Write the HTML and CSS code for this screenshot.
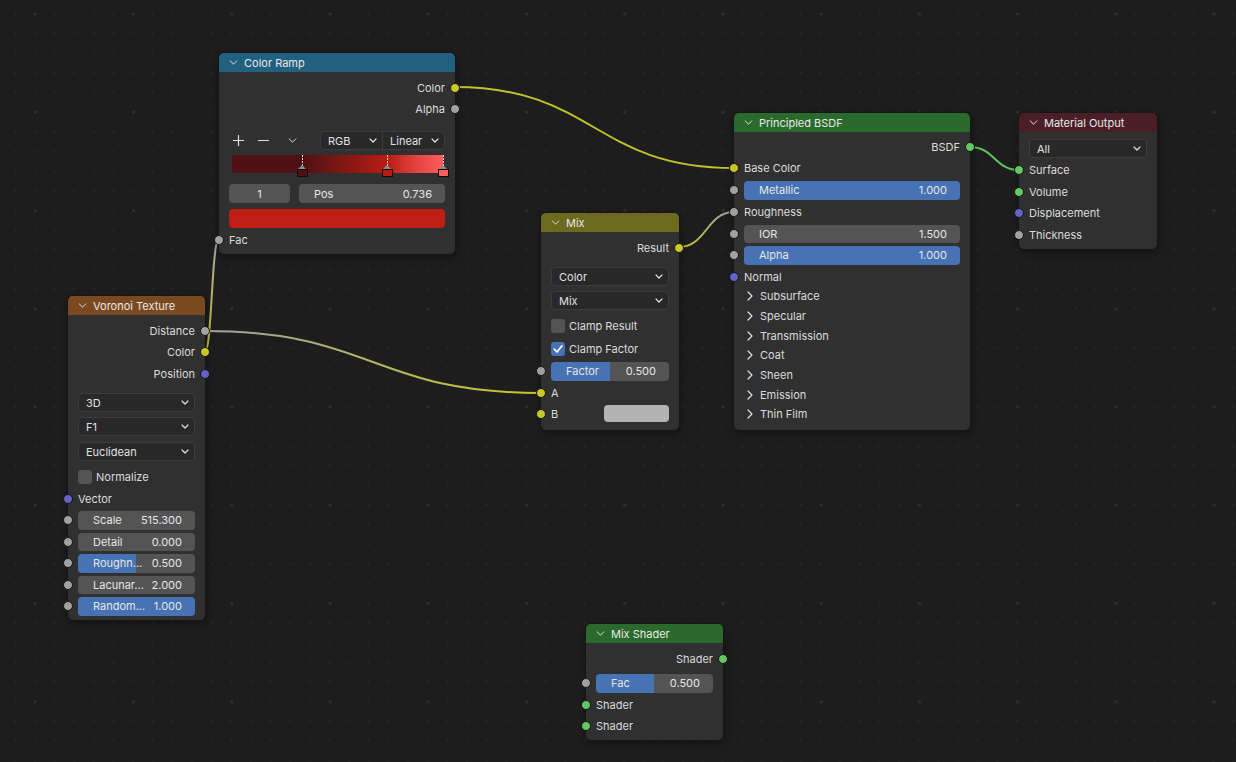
FILE: index.html
```html
<!DOCTYPE html>
<html>
<head>
<meta charset="utf-8">
<title>Shader Editor</title>
<link rel="stylesheet" href="styles.css">
</head>
<body>
<div class="canvas">
  <svg class="links" width="1236" height="762" viewBox="0 0 1236 762">
    <defs>
      <linearGradient id="gFac" gradientUnits="userSpaceOnUse" x1="205" y1="352" x2="218.5" y2="240">
        <stop offset="0" stop-color="#c7c729"/><stop offset="1" stop-color="#a1a1a1"/>
      </linearGradient>
      <linearGradient id="gDist" gradientUnits="userSpaceOnUse" x1="205" y1="331" x2="541" y2="393">
        <stop offset="0" stop-color="#a1a1a1"/><stop offset="1" stop-color="#c7c729"/>
      </linearGradient>
      <linearGradient id="gRes" gradientUnits="userSpaceOnUse" x1="679" y1="247" x2="734" y2="212">
        <stop offset="0" stop-color="#c7c729"/><stop offset="1" stop-color="#a1a1a1"/>
      </linearGradient>
    </defs>
    <path class="link" stroke="#c2c22a" d="M454.5,87 C594.25,87 594.25,168 734,168"/>
    <path class="link" stroke="url(#gFac)" d="M205,352 C211.75,352 211.75,240 218.5,240"/>
    <path class="link" stroke="url(#gDist)" d="M205,331 C373,331 373,393 541,393"/>
    <path class="link" stroke="url(#gRes)" d="M679,247 C706.5,247 706.5,212 734,212"/>
    <path class="link" stroke="#5ec25e" d="M970,147 C994.5,147 994.5,170 1019,170"/>
  </svg>

  <!-- Color Ramp -->
  <div class="node n-ramp">
    <div class="hdr h-blue"><svg class="chev" viewBox="0 0 10 6"><path d="M1 1 L5 5 L9 1"/></svg><span>Color Ramp</span></div>
    <div class="body pt5 pb3">
      <div class="row out">Color<i class="sock s-yel"></i></div>
      <div class="row out">Alpha<i class="sock s-gry"></i></div>
      <div class="ramp-tools mt12">
        <span class="tbtn"><svg viewBox="0 0 11 11"><path d="M5.5 0.5 V10.5 M0.5 5.5 H10.5"/></svg></span>
        <span class="tbtn"><svg viewBox="0 0 11 11"><path d="M0.5 5.5 H10.5"/></svg></span>
        <span class="tbtn tb3"><svg viewBox="0 0 10 6"><path d="M1 1 L5 5 L9 1"/></svg></span>
        <div class="dd-group">
          <div class="dd-half rgb"><span>RGB</span><svg class="ddchev" viewBox="0 0 8 5"><path d="M1 1 L4 4 L7 1"/></svg></div>
          <div class="dd-half lin"><span>Linear</span><svg class="ddchev" viewBox="0 0 8 5"><path d="M1 1 L4 4 L7 1"/></svg></div>
        </div>
      </div>
      <div class="ramp mt5">
        <div class="stop" style="--p:33.3%; --c:#4e1013"><i class="dash"></i><i class="tri"></i><i class="sq"></i></div>
        <div class="stop" style="--p:73.6%; --c:#b81c14"><i class="dash"></i><i class="tri"></i><i class="sq"></i></div>
        <div class="stop" style="--p:100%; --c:#ff5e5e"><i class="dash"></i><i class="tri"></i><i class="sq"></i></div>
      </div>
      <div class="ramp-nums mt11">
        <div class="field idx">1</div>
        <div class="field grow"><span>Pos</span><span>0.736</span></div>
      </div>
      <div class="swatch-wide mt6"></div>
      <div class="row in h22 mt1">Fac<i class="sock s-gry"></i></div>
    </div>
  </div>

  <!-- Voronoi Texture -->
  <div class="node n-vor">
    <div class="hdr h-orange"><svg class="chev" viewBox="0 0 10 6"><path d="M1 1 L5 5 L9 1"/></svg><span>Voronoi Texture</span></div>
    <div class="body pt5 pb45">
      <div class="row out h215">Distance<i class="sock s-gry"></i></div>
      <div class="row out h215">Color<i class="sock s-yel"></i></div>
      <div class="row out h215">Position<i class="sock s-pur"></i></div>
      <div class="dd mt85"><span>3D</span><svg class="ddchev" viewBox="0 0 8 5"><path d="M1 1 L4 4 L7 1"/></svg></div>
      <div class="dd mt5"><span>F1</span><svg class="ddchev" viewBox="0 0 8 5"><path d="M1 1 L4 4 L7 1"/></svg></div>
      <div class="dd mt6"><span>Euclidean</span><svg class="ddchev" viewBox="0 0 8 5"><path d="M1 1 L4 4 L7 1"/></svg></div>
      <div class="row chk h22 mt5"><i class="cb"></i>Normalize</div>
      <div class="row in">Vector<i class="sock s-pur"></i></div>
      <div class="field mt2"><span>Scale</span><span>515.300</span><i class="sock s-gry"></i></div>
      <div class="field mt3"><span>Detail</span><span>0.000</span><i class="sock s-gry"></i></div>
      <div class="field mt3" style="--v:49.5%"><span>Roughn...</span><span>0.500</span><i class="sock s-gry"></i></div>
      <div class="field mt3"><span>Lacunar...</span><span>2.000</span><i class="sock s-gry"></i></div>
      <div class="field mt3" style="--v:100%"><span>Random...</span><span>1.000</span><i class="sock s-gry"></i></div>
    </div>
  </div>

  <!-- Mix -->
  <div class="node n-mix">
    <div class="hdr h-olive"><svg class="chev" viewBox="0 0 10 6"><path d="M1 1 L5 5 L9 1"/></svg><span>Mix</span></div>
    <div class="body pt5 pb6">
      <div class="row out">Result<i class="sock s-yel"></i></div>
      <div class="dd mt9"><span>Color</span><svg class="ddchev" viewBox="0 0 8 5"><path d="M1 1 L4 4 L7 1"/></svg></div>
      <div class="dd mt5"><span>Mix</span><svg class="ddchev" viewBox="0 0 8 5"><path d="M1 1 L4 4 L7 1"/></svg></div>
      <div class="row chk h22 mt5"><i class="cb"></i>Clamp Result</div>
      <div class="row chk h22 mt1"><i class="cb on"><svg viewBox="0 0 14 14"><path d="M3.2 7.2 L6 10 L11 3.8"/></svg></i>Clamp Factor</div>
      <div class="field mt2" style="--v:50%"><span>Factor</span><span>0.500</span><i class="sock s-gry"></i></div>
      <div class="row in mt15">A<i class="sock s-yel"></i></div>
      <div class="row in between">B<i class="sock s-yel"></i><span class="swatch-b"></span></div>
    </div>
  </div>

  <!-- Principled BSDF -->
  <div class="node n-bsdf">
    <div class="hdr h-green"><svg class="chev" viewBox="0 0 10 6"><path d="M1 1 L5 5 L9 1"/></svg><span>Principled BSDF</span></div>
    <div class="body pt4 pb56">
      <div class="row out h215">BSDF<i class="sock s-grn"></i></div>
      <div class="row in h215">Base Color<i class="sock s-yel"></i></div>
      <div class="field mt2" style="--v:100%"><span>Metallic</span><span>1.000</span><i class="sock s-gry"></i></div>
      <div class="row in mt2">Roughness<i class="sock s-gry"></i></div>
      <div class="field mt2"><span>IOR</span><span>1.500</span><i class="sock s-gry"></i></div>
      <div class="field mt3" style="--v:100%"><span>Alpha</span><span>1.000</span><i class="sock s-gry"></i></div>
      <div class="row in h20 mt2">Normal<i class="sock s-pur"></i></div>
      <div class="panel"><svg class="pchev" viewBox="0 0 6 10"><path d="M1 1 L5 5 L1 9"/></svg>Subsurface</div>
      <div class="panel"><svg class="pchev" viewBox="0 0 6 10"><path d="M1 1 L5 5 L1 9"/></svg>Specular</div>
      <div class="panel"><svg class="pchev" viewBox="0 0 6 10"><path d="M1 1 L5 5 L1 9"/></svg>Transmission</div>
      <div class="panel"><svg class="pchev" viewBox="0 0 6 10"><path d="M1 1 L5 5 L1 9"/></svg>Coat</div>
      <div class="panel"><svg class="pchev" viewBox="0 0 6 10"><path d="M1 1 L5 5 L1 9"/></svg>Sheen</div>
      <div class="panel"><svg class="pchev" viewBox="0 0 6 10"><path d="M1 1 L5 5 L1 9"/></svg>Emission</div>
      <div class="panel"><svg class="pchev" viewBox="0 0 6 10"><path d="M1 1 L5 5 L1 9"/></svg>Thin Film</div>
    </div>
  </div>

  <!-- Material Output -->
  <div class="node n-out">
    <div class="hdr h-maroon"><svg class="chev" viewBox="0 0 10 6"><path d="M1 1 L5 5 L9 1"/></svg><span>Material Output</span></div>
    <div class="body pt7 pb35">
      <div class="dd"><span>All</span><svg class="ddchev" viewBox="0 0 8 5"><path d="M1 1 L4 4 L7 1"/></svg></div>
      <div class="row in h216 mt15">Surface<i class="sock s-grn"></i></div>
      <div class="row in h216">Volume<i class="sock s-grn"></i></div>
      <div class="row in h216">Displacement<i class="sock s-pur"></i></div>
      <div class="row in h216">Thickness<i class="sock s-gry"></i></div>
    </div>
  </div>

  <!-- Mix Shader -->
  <div class="node n-mixsh">
    <div class="hdr h-green"><svg class="chev" viewBox="0 0 10 6"><path d="M1 1 L5 5 L9 1"/></svg><span>Mix Shader</span></div>
    <div class="body pt5 pb35">
      <div class="row out">Shader<i class="sock s-grn"></i></div>
      <div class="field mt5" style="--v:50%"><span>Fac</span><span>0.500</span><i class="sock s-gry"></i></div>
      <div class="row in mt2">Shader<i class="sock s-grn"></i></div>
      <div class="row in">Shader<i class="sock s-grn"></i></div>
    </div>
  </div>
</div>
</body>
</html>
```

FILE: styles.css
```css
* { box-sizing: border-box; margin: 0; padding: 0; }
html, body { width: 1236px; height: 762px; overflow: hidden; }
body {
  background: #1d1d1d;
  font-family: Inter, "Noto Sans", "DejaVu Sans", sans-serif;
  font-size: 11px;
  color: #dcdcdc;
}

.canvas {
  position: relative;
  width: 1236px;
  height: 762px;
  background-color: #1d1d1d;
  background-image:
    radial-gradient(circle at center, #303030 0 1.2px, transparent 1.7px),
    radial-gradient(circle at center, #272727 0 0.8px, transparent 1.3px);
  background-size: 98.25px 98.25px, 19.65px 19.65px;
  background-position: -13.8px -35.1px, 5.5px 4.2px;
}

.links { position: absolute; left: 0; top: 0; }
.link { fill: none; stroke-width: 2; stroke-linecap: round; }

/* nodes on the free canvas */
.node {
  position: absolute;
  background: #303030;
  border-radius: 5px;
  box-shadow: 0 0 0 1px #161616, 1px 3px 8px rgba(0, 0, 0, 0.45);
}
.n-ramp  { left: 219px;  top: 53px;  width: 236px; }
.n-vor   { left: 68px;   top: 296px; width: 137px; }
.n-mix   { left: 541px;  top: 213px; width: 138px; }
.n-bsdf  { left: 734px;  top: 113px; width: 236px; }
.n-out   { left: 1019px; top: 113px; width: 138px; }
.n-mixsh { left: 586px;  top: 624px; width: 137px; }

.hdr {
  height: 19px;
  border-radius: 5px 5px 0 0;
  display: flex;
  align-items: center;
  gap: 6px;
  padding-left: 10px;
  color: #e8e8e8;
  white-space: nowrap;
}
.h-blue   { background: #22607f; }
.h-orange { background: #7a4920; }
.h-olive  { background: #6b6a1e; }
.h-green  { background: #2a6a2c; }
.h-maroon { background: #4a1e27; }

.chev { width: 9px; height: 5px; flex: none; }
.chev path, .ddchev path, .pchev path, .tbtn path {
  fill: none; stroke: #e0e0e0; stroke-width: 1.2; stroke-linecap: round; stroke-linejoin: round;
}

.body { display: flex; flex-direction: column; padding: 0 10px; }

.row {
  position: relative;
  display: flex;
  align-items: center;
  height: 21px;
  white-space: nowrap;
}
.row.out { justify-content: flex-end; }
.row.between { justify-content: space-between; }
.h20  { height: 20px; }
.h215 { height: 21.5px; }
.h216 { height: 21.6px; }
.h22  { height: 22px; }

.sock {
  position: absolute;
  top: 50%;
  width: 10px;
  height: 10px;
  margin-top: -5px;
  border-radius: 50%;
  border: 1px solid #141414;
}
.out .sock { right: -15px; }
.in .sock, .field .sock { left: -15px; }
.s-yel { background: #c7c729; }
.s-gry { background: #a1a1a1; }
.s-pur { background: #6363c7; }
.s-grn { background: #63c763; }

/* spacing helpers */
.pt4 { padding-top: 4px; } .pt5 { padding-top: 5px; } .pt7 { padding-top: 7px; }
.pb3 { padding-bottom: 3px; } .pb35 { padding-bottom: 3.5px; } .pb45 { padding-bottom: 4.5px; }
.pb56 { padding-bottom: 5.6px; } .pb6 { padding-bottom: 6px; }
.mt1 { margin-top: 1px; } .mt15 { margin-top: 1.5px; } .mt2 { margin-top: 2px; } .mt3 { margin-top: 3px; }
.mt5 { margin-top: 5px; } .mt6 { margin-top: 6px; } .mt85 { margin-top: 8.5px; } .mt9 { margin-top: 9px; }
.mt11 { margin-top: 11px; } .mt12 { margin-top: 12px; }

/* number fields */
.field {
  position: relative;
  display: flex;
  align-items: center;
  justify-content: space-between;
  height: 18.5px;
  padding: 0 13px 0 15px;
  border-radius: 4px;
  color: #e6e6e6;
  white-space: nowrap;
  background: linear-gradient(90deg, #4772b3 var(--v, 0%), #545454 var(--v, 0%));
}

/* dropdowns */
.dd {
  display: flex;
  align-items: center;
  justify-content: space-between;
  height: 19px;
  padding: 0 5px 0 7px;
  background: #282828;
  border: 1px solid #3c3c3c;
  border-radius: 4px;
  color: #e0e0e0;
}
.ddchev { width: 8px; height: 5px; flex: none; }

/* checkbox rows */
.chk { gap: 4px; }
.cb {
  width: 14px; height: 14px; flex: none;
  border-radius: 3px;
  background: #545454;
  display: flex;
}
.cb.on { background: #4772b3; }
.cb svg { width: 14px; height: 14px; }
.cb svg path { fill: none; stroke: #ffffff; stroke-width: 1.7; stroke-linecap: round; stroke-linejoin: round; }

.swatch-b {
  width: 65px; height: 17px;
  border-radius: 4px;
  background: #b3b3b3;
}

/* color ramp */
.ramp-tools { display: flex; align-items: center; height: 19px; }
.tbtn { width: 19px; height: 19px; display: flex; align-items: center; justify-content: center; }
.tbtn + .tbtn { margin-left: 6px; }
.tbtn.tb3 { margin-left: 10px; }
.tbtn svg { width: 11px; height: 11px; }
.tbtn.tb3 svg { width: 9px; height: 5px; }
.dd-group {
  margin-left: auto;
  display: flex;
  width: 125px;
  height: 19px;
  background: #282828;
  border: 1px solid #3c3c3c;
  border-radius: 4px;
  color: #e0e0e0;
}
.dd-half { display: flex; align-items: center; justify-content: space-between; padding: 0 5px 0 7px; }
.dd-half.rgb { width: 62px; border-right: 1px solid #3c3c3c; }
.dd-half.lin { flex: 1; }

.ramp {
  position: relative;
  height: 18px;
  margin-left: 3px;
  margin-right: 2px;
  background: linear-gradient(90deg, #4e1013 0%, #4e1013 33.3%, #7a1714 50%, #b81c14 73.6%, #e0403c 86%, #ff5e5e 100%);
}
.stop { position: absolute; left: var(--p); top: 0; width: 0; height: 100%; }
.stop .dash {
  position: absolute; left: -0.5px; top: 0; width: 1px; height: 11px;
  background: repeating-linear-gradient(180deg, #d8d8d8 0 2px, transparent 2px 3px);
}
.stop .tri {
  position: absolute; left: -5px; top: 10px;
  width: 0; height: 0;
  border-left: 5px solid transparent; border-right: 5px solid transparent;
  border-bottom: 5px solid #8c8c8c;
}
.stop .sq {
  position: absolute; left: -5.5px; top: 14px;
  width: 11px; height: 8px;
  background: var(--c);
  border: 1px solid #0c0c0c;
}

.ramp-nums { display: flex; gap: 9px; }
.field.idx { width: 61px; justify-content: center; padding: 0; background: #545454; height: 19px; }
.field.grow { flex: 1; height: 19px; }

.swatch-wide { height: 19px; border-radius: 4px; background: #be1e13; }

/* principled panels */
.panel {
  display: flex;
  align-items: center;
  gap: 7px;
  height: 19.7px;
  padding-left: 3px;
  white-space: nowrap;
}
.pchev { width: 6px; height: 10px; flex: none; }
```
